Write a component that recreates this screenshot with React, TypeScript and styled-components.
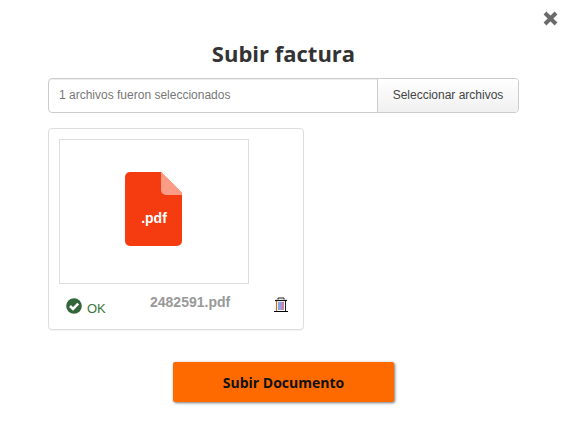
import React from "react";
import styled, { createGlobalStyle } from "styled-components";

const Global = createGlobalStyle`
  html, body { margin: 0; padding: 0; background: #fff; }
  body { font-family: "Liberation Sans", Arial, sans-serif; }
`;

const Modal = styled.div`
  width: 567px;
  height: 442px;
  padding: 0 48px;
  box-sizing: border-box;
  position: relative;
  overflow: hidden;
`;

const CloseButton = styled.button`
  position: absolute;
  top: 11px;
  right: 9px;
  width: 15px;
  height: 15px;
  padding: 0;
  border: 0;
  background: none;
  display: block;
`;

const Title = styled.h2`
  margin: 0;
  padding-top: 39px;
  height: 39px;
  font: 700 22px/29px "Open Sans", sans-serif;
  color: #333;
  text-align: center;
`;

const InputGroup = styled.div`
  display: flex;
  width: 471px;
  height: 35px;
  box-sizing: border-box;
  border: 1px solid #ccc;
  border-radius: 4px;
  box-shadow: inset 0 1px 1px rgba(0, 0, 0, 0.075);
  overflow: hidden;
`;

const FileLabel = styled.div`
  flex: 1;
  padding-left: 10px;
  font-size: 12px;
  line-height: 32px;
  color: #777;
`;

const BrowseButton = styled.div`
  width: 141px;
  box-sizing: border-box;
  border-left: 1px solid #ccc;
  background: linear-gradient(#fff, #f0f0f0);
  font-size: 12px;
  line-height: 32px;
  text-align: center;
  color: #444;
`;

const FileCard = styled.div`
  margin-top: 15px;
  width: 256px;
  height: 202px;
  box-sizing: border-box;
  border: 1px solid #ddd;
  border-radius: 4px;
  padding: 10px;
  box-shadow: 0 1px 1px rgba(0, 0, 0, 0.05);
`;

const Preview = styled.div`
  width: 190px;
  height: 145px;
  box-sizing: border-box;
  border: 1px solid #ddd;
  padding: 0 1px 5px 0;
  display: flex;
  align-items: center;
  justify-content: center;
`;

const Footer = styled.div`
  display: flex;
  align-items: flex-start;
  height: 36px;
  padding-left: 7px;
`;

const Status = styled.div`
  display: flex;
  align-items: flex-start;
  gap: 5px;
  width: 84px;
  padding-top: 14px;
  font-size: 13px;
  line-height: 16px;
  color: #3c763d;
`;

const StatusText = styled.span`
  padding-top: 3px;
`;

const FileName = styled.div`
  width: 124px;
  padding-top: 9px;
  font-size: 14px;
  line-height: 18px;
  font-weight: 700;
  color: #999;
`;

const TrashButton = styled.div`
  padding-top: 13px;
  line-height: 0;
`;

const Actions = styled.div`
  width: 471px;
  margin-top: 32px;
  display: flex;
  justify-content: center;
`;

const SubmitButton = styled.button`
  width: 221px;
  height: 40px;
  border: 0;
  border-radius: 2px;
  background: #ff6a00;
  color: #111;
  font: 700 14px "Open Sans", sans-serif;
  box-shadow: 1px 1px 3px rgba(0, 0, 0, 0.55);
`;

export default function App() {
  return (
    <Modal>
      <Global />
      <CloseButton aria-label="Cerrar">
        <svg width="15" height="15" viewBox="0 0 15 15">
          <path d="M2 2 L13 13 M13 2 L2 13" stroke="#6b6b6b" strokeWidth="4" />
        </svg>
      </CloseButton>
      <Title>Subir factura</Title>
      <InputGroup>
        <FileLabel>1 archivos fueron seleccionados</FileLabel>
        <BrowseButton>Seleccionar archivos</BrowseButton>
      </InputGroup>
      <FileCard>
        <Preview>
          <svg width="57" height="74" viewBox="0 0 57 74">
            <path d="M5 0 H36 L57 21 V69 A5 5 0 0 1 52 74 H5 A5 5 0 0 1 0 69 V5 A5 5 0 0 1 5 0 Z" fill="#f53b10" />
            <path d="M36 0 L57 21 V23 H41 A5 5 0 0 1 36 18 Z" fill="#fb9d86" />
            <text x="29" y="51" textAnchor="middle" fontFamily="Liberation Sans, sans-serif" fontWeight="700" fontSize="14" fill="#fff">.pdf</text>
          </svg>
        </Preview>
        <Footer>
          <Status>
            <svg width="16" height="16" viewBox="0 0 16 16">
              <circle cx="8" cy="8" r="7.8" fill="#33673a" />
              <path d="M4 8 L7 11 L12.2 5.6" fill="none" stroke="#fff" strokeWidth="2.6" />
            </svg>
            <StatusText>OK</StatusText>
          </Status>
          <FileName>2482591.pdf</FileName>
          <TrashButton>
            <svg width="14" height="15" viewBox="0 0 14 15">
              <path d="M0 14.5 H14" stroke="#000" strokeWidth="1" />
              <path d="M1 3.5 H13" stroke="#111" strokeWidth="1.2" />
              <path d="M4 2.5 V1 H10 V2.5" fill="none" stroke="#222" strokeWidth="1" />
              <path d="M2.5 4 V14" stroke="#b8741f" strokeWidth="1.2" />
              <path d="M11.5 4 V14" stroke="#222" strokeWidth="1" />
              <path d="M5 5 V13" stroke="#2f6fd0" strokeWidth="1.2" />
              <path d="M7 5 V13" stroke="#6a4fc0" strokeWidth="1.2" />
              <path d="M9 5 V13" stroke="#a8306a" strokeWidth="1.2" />
            </svg>
          </TrashButton>
        </Footer>
      </FileCard>
      <Actions>
        <SubmitButton>Subir Documento</SubmitButton>
      </Actions>
    </Modal>
  );
}
